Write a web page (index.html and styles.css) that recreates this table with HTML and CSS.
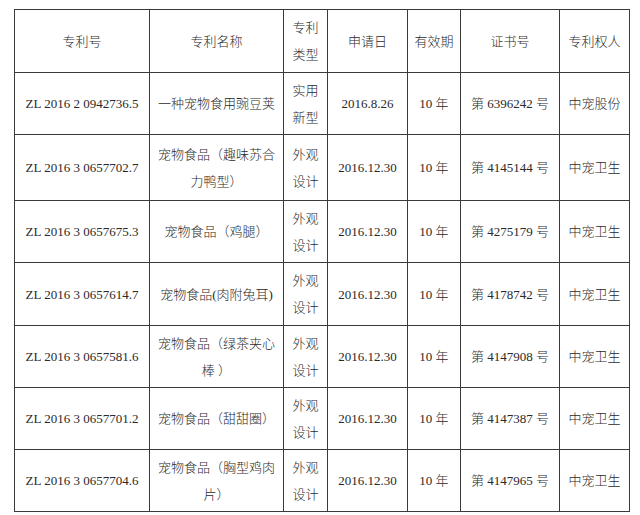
FILE: index.html
```html
<!DOCTYPE html>
<html lang="zh-CN">
<head>
<meta charset="utf-8">
<title>专利列表</title>
<link rel="stylesheet" href="styles.css">
</head>
<body>
<div class="table">
  <div class="cell">专利号</div>
  <div class="cell">专利名称</div>
  <div class="cell">专利<br>类型</div>
  <div class="cell">申请日</div>
  <div class="cell">有效期</div>
  <div class="cell">证书号</div>
  <div class="cell">专利权人</div>

  <div class="cell">ZL 2016 2 0942736.5</div>
  <div class="cell">一种宠物食用豌豆荚</div>
  <div class="cell">实用<br>新型</div>
  <div class="cell">2016.8.26</div>
  <div class="cell">10 年</div>
  <div class="cell">第 6396242 号</div>
  <div class="cell">中宠股份</div>

  <div class="cell">ZL 2016 3 0657702.7</div>
  <div class="cell">宠物食品（趣味苏合<br>力鸭型）</div>
  <div class="cell">外观<br>设计</div>
  <div class="cell">2016.12.30</div>
  <div class="cell">10 年</div>
  <div class="cell">第 4145144 号</div>
  <div class="cell">中宠卫生</div>

  <div class="cell">ZL 2016 3 0657675.3</div>
  <div class="cell">宠物食品（鸡腿）</div>
  <div class="cell">外观<br>设计</div>
  <div class="cell">2016.12.30</div>
  <div class="cell">10 年</div>
  <div class="cell">第 4275179 号</div>
  <div class="cell">中宠卫生</div>

  <div class="cell">ZL 2016 3 0657614.7</div>
  <div class="cell">宠物食品(肉附兔耳)</div>
  <div class="cell">外观<br>设计</div>
  <div class="cell">2016.12.30</div>
  <div class="cell">10 年</div>
  <div class="cell">第 4178742 号</div>
  <div class="cell">中宠卫生</div>

  <div class="cell">ZL 2016 3 0657581.6</div>
  <div class="cell">宠物食品（绿茶夹心<br>棒 ）</div>
  <div class="cell">外观<br>设计</div>
  <div class="cell">2016.12.30</div>
  <div class="cell">10 年</div>
  <div class="cell">第 4147908 号</div>
  <div class="cell">中宠卫生</div>

  <div class="cell">ZL 2016 3 0657701.2</div>
  <div class="cell">宠物食品（甜甜圈）</div>
  <div class="cell">外观<br>设计</div>
  <div class="cell">2016.12.30</div>
  <div class="cell">10 年</div>
  <div class="cell">第 4147387 号</div>
  <div class="cell">中宠卫生</div>

  <div class="cell">ZL 2016 3 0657704.6</div>
  <div class="cell">宠物食品（胸型鸡肉<br>片）</div>
  <div class="cell">外观<br>设计</div>
  <div class="cell">2016.12.30</div>
  <div class="cell">10 年</div>
  <div class="cell">第 4147965 号</div>
  <div class="cell">中宠卫生</div>
</div>
</body>
</html>
```

FILE: styles.css
```css
html, body {
  margin: 0;
  padding: 0;
  background: #ffffff;
}

body {
  padding: 9px 0 0 14px;
  font-family: "Liberation Serif", "Noto Sans CJK SC", serif;
  font-size: 13px;
  font-weight: 300;
  color: #2a2a2a;
}

.table {
  display: grid;
  grid-template-columns: 134px 133px 43px 79px 52px 98px 69px;
  grid-template-rows: 62px 61px 65px 61px 62px 61px 61px 61px;
  gap: 1px;
  padding: 1px;
  width: max-content;
  background: #3a3a3a;
}

.cell {
  background: #ffffff;
  display: flex;
  align-items: center;
  justify-content: center;
  text-align: center;
  line-height: 27px;
  white-space: nowrap;
}
```
